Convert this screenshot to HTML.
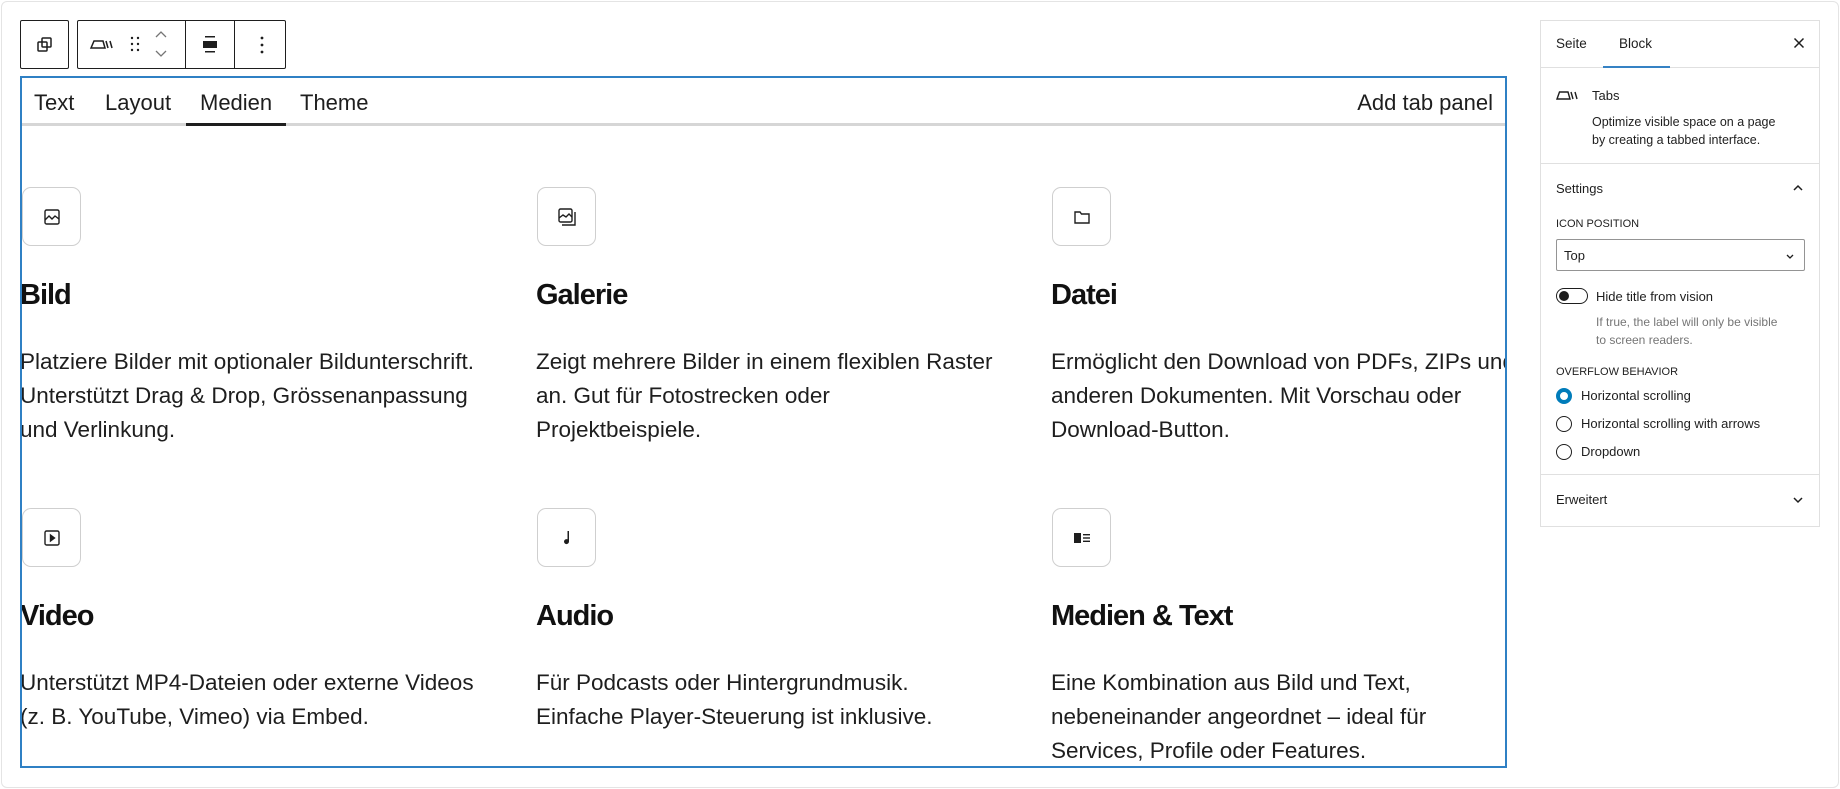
<!DOCTYPE html>
<html><head><meta charset="utf-8"><style>
*{box-sizing:border-box;margin:0;padding:0}
body{width:1840px;height:789px;background:#fff;font-family:"Liberation Sans",sans-serif;color:#1e1e1e;position:relative;overflow:hidden}
.frame{position:absolute;left:1px;top:1px;width:1838px;height:787px;border:1px solid #e4e4e4;border-radius:6px}
.abs{position:absolute}
.tb{position:absolute;top:20px;height:49px;border:1px solid #1e1e1e;border-radius:2px;background:#fff}
.block{position:absolute;left:20px;top:76px;width:1487px;height:692px;border:2px solid #2f80c4;overflow:hidden}
.tab{position:absolute;top:12px;font-size:22px;color:#1e1e1e}
.ib{position:absolute;width:59px;height:59px;border:1.5px solid #cfcfcf;border-radius:9px;display:flex;align-items:center;justify-content:center}
.h{position:absolute;font-size:29px;font-weight:bold;letter-spacing:-1px;color:#111}
.p{position:absolute;font-size:22.5px;line-height:34px;letter-spacing:0;white-space:nowrap;color:#1e1e1e}
.side{position:absolute;left:1540px;top:20px;width:280px;height:507px;border:1px solid #e0e0e0;font-size:13px}
.hr{position:absolute;left:0;width:100%;height:1px;background:#e0e0e0}
.radio{position:absolute;left:15px;width:16px;height:16px;border:1.5px solid #1e1e1e;border-radius:50%}
</style></head><body>
<div class="frame"></div>

<div class="tb" style="left:20px;width:49px">
<svg class="abs" style="left:14px;top:14px" width="20" height="20" viewBox="0 0 20 20" fill="none" stroke="#1e1e1e" stroke-width="1.5"><rect x="3" y="7" width="9" height="9" rx="1"/><rect x="7" y="3" width="9" height="9" rx="1"/></svg>
</div>
<div class="tb" style="left:77px;width:209px">
<svg class="abs" style="left:11px;top:15px" width="28" height="16" viewBox="0 0 28 16" fill="none" stroke="#1e1e1e" stroke-width="1.5"><path d="M2 12 L5 5 H14 L16 12 Z"/><path d="M17 5 L19 12 M21 5 L23 12"/></svg>
<svg class="abs" style="left:52px;top:14px" width="10" height="20" viewBox="0 0 10 20" fill="#1e1e1e"><circle cx="2" cy="3" r="1.2"/><circle cx="8" cy="3" r="1.2"/><circle cx="2" cy="9" r="1.2"/><circle cx="8" cy="9" r="1.2"/><circle cx="2" cy="15" r="1.2"/><circle cx="8" cy="15" r="1.2"/></svg>
<svg class="abs" style="left:76px;top:8px" width="14" height="32" viewBox="0 0 14 32" fill="none" stroke="#757575" stroke-width="1.3"><path d="M2 8 L7 3 L12 8"/><path d="M2 22 L7 27 L12 22"/></svg>
<div class="abs" style="left:107px;top:0;width:1px;height:47px;background:#1e1e1e"></div>
<svg class="abs" style="left:120px;top:12px" width="24" height="24" viewBox="0 0 24 24" fill="#1e1e1e"><rect x="7" y="3" width="10" height="1.5"/><rect x="5" y="8" width="14" height="7"/><rect x="7" y="18" width="10" height="1.5"/></svg>
<div class="abs" style="left:156px;top:0;width:1px;height:47px;background:#1e1e1e"></div>
<svg class="abs" style="left:172px;top:12px" width="24" height="24" viewBox="0 0 24 24" fill="#1e1e1e"><circle cx="12" cy="5" r="1.4"/><circle cx="12" cy="12" r="1.4"/><circle cx="12" cy="19" r="1.4"/></svg>
</div>

<div class="block">
<div class="tab" style="left:12px">Text</div>
<div class="tab" style="left:83px">Layout</div>
<div class="tab" style="left:178px">Medien</div>
<div class="tab" style="left:278px">Theme</div>
<div class="tab" style="right:12px">Add tab panel</div>
<div class="abs" style="left:0;top:45px;width:100%;height:3px;background:#d6d6d6"></div>
<div class="abs" style="left:164px;top:45px;width:100px;height:3px;background:#1e1e1e"></div>

<div class="ib" style="left:0;top:109px"><svg width="20" height="20" viewBox="0 0 20 20" fill="none" stroke="#1e1e1e" stroke-width="1.4"><rect x="3" y="3" width="14" height="14" rx="1.5"/><path d="M3 13 L7 9 L10 12 L13 9 L17 12"/></svg></div>
<div class="ib" style="left:515px;top:109px"><svg width="22" height="22" viewBox="0 0 22 22" fill="none" stroke="#1e1e1e" stroke-width="1.4"><rect x="3" y="3" width="13" height="13" rx="1.5"/><path d="M3 12 L7 9 L10 11 L13 8 L16 11"/><path d="M6 19 H19 V6"/></svg></div>
<div class="ib" style="left:1030px;top:109px"><svg width="20" height="20" viewBox="0 0 20 20" fill="none" stroke="#1e1e1e" stroke-width="1.4"><path d="M3 5 V16 H17 V7 H9.5 L8 5 Z"/></svg></div>

<div class="h" style="left:-2px;top:201px">Bild</div>
<div class="h" style="left:514px;top:201px">Galerie</div>
<div class="h" style="left:1029px;top:201px">Datei</div>

<div class="p" style="left:-2px;top:267px">Platziere Bilder mit optionaler Bildunterschrift.<br>Unterstützt Drag &amp; Drop, Grössenanpassung<br>und Verlinkung.</div>
<div class="p" style="left:514px;top:267px">Zeigt mehrere Bilder in einem flexiblen Raster<br>an. Gut für Fotostrecken oder<br>Projektbeispiele.</div>
<div class="p" style="left:1029px;top:267px">Ermöglicht den Download von PDFs, ZIPs und<br>anderen Dokumenten. Mit Vorschau oder<br>Download-Button.</div>

<div class="ib" style="left:0;top:430px"><svg width="20" height="20" viewBox="0 0 20 20" fill="none" stroke="#1e1e1e" stroke-width="1.4"><rect x="3" y="3" width="14" height="14" rx="1.5"/><path d="M8.5 7 L12.5 10 L8.5 13 Z" fill="#1e1e1e"/></svg></div>
<div class="ib" style="left:515px;top:430px"><svg width="20" height="20" viewBox="0 0 20 20" fill="#1e1e1e"><path d="M10.5 3 H12 V13.5 A2.5 2.5 0 1 1 10.5 11.3 Z"/></svg></div>
<div class="ib" style="left:1030px;top:430px"><svg width="22" height="20" viewBox="0 0 22 20" fill="#1e1e1e"><rect x="3" y="5" width="7" height="10"/><rect x="12" y="6" width="7" height="1.4"/><rect x="12" y="9.3" width="7" height="1.4"/><rect x="12" y="12.6" width="7" height="1.4"/></svg></div>

<div class="h" style="left:-2px;top:522px">Video</div>
<div class="h" style="left:514px;top:522px">Audio</div>
<div class="h" style="left:1029px;top:522px">Medien &amp; Text</div>

<div class="p" style="left:-2px;top:588px">Unterstützt MP4-Dateien oder externe Videos<br>(z. B. YouTube, Vimeo) via Embed.</div>
<div class="p" style="left:514px;top:588px">Für Podcasts oder Hintergrundmusik.<br>Einfache Player-Steuerung ist inklusive.</div>
<div class="p" style="left:1029px;top:588px">Eine Kombination aus Bild und Text,<br>nebeneinander angeordnet – ideal für<br>Services, Profile oder Features.</div>
</div>

<div class="side">
<div class="abs" style="left:15px;top:15px;font-size:13.5px">Seite</div>
<div class="abs" style="left:78px;top:15px;font-size:13.5px;font-weight:500">Block</div>
<svg class="abs" style="left:250px;top:14px" width="16" height="16" viewBox="0 0 16 16" stroke="#1e1e1e" stroke-width="1.5"><path d="M3.5 3.5 L12.5 12.5 M12.5 3.5 L3.5 12.5"/></svg>
<div class="hr" style="top:46px"></div>
<div class="abs" style="left:62px;top:45px;width:67px;height:2px;background:#3582c4"></div>
<svg class="abs" style="left:14px;top:67px" width="26" height="14" viewBox="0 0 26 14" fill="none" stroke="#1e1e1e" stroke-width="1.4"><path d="M2 11 L4.5 4 H13 L15 11 Z"/><path d="M16 4 L18 11 M20 4 L22 11"/></svg>
<div class="abs" style="left:51px;top:67px">Tabs</div>
<div class="abs" style="left:51px;top:92px;line-height:18px;font-size:12.5px">Optimize visible space on a page<br>by creating a tabbed interface.</div>
<div class="hr" style="top:142px"></div>
<div class="abs" style="left:15px;top:160px;font-size:13px">Settings</div>
<svg class="abs" style="left:250px;top:160px" width="14" height="14" viewBox="0 0 14 14" fill="none" stroke="#1e1e1e" stroke-width="1.5"><path d="M3 9 L7 5 L11 9"/></svg>
<div class="abs" style="left:15px;top:197px;font-size:11px">ICON POSITION</div>
<div class="abs" style="left:15px;top:218px;width:249px;height:32px;border:1px solid #949494;border-radius:2px"></div>
<div class="abs" style="left:23px;top:227px;font-size:13px">Top</div>
<svg class="abs" style="left:243px;top:229px" width="12" height="12" viewBox="0 0 12 12" fill="none" stroke="#1e1e1e" stroke-width="1.3"><path d="M3 5 L6 8 L9 5"/></svg>
<div class="abs" style="left:15px;top:267px;width:32px;height:16px;border:1px solid #1e1e1e;border-radius:9px"></div>
<div class="abs" style="left:18px;top:270px;width:10px;height:10px;background:#1e1e1e;border-radius:50%"></div>
<div class="abs" style="left:55px;top:268px;font-size:13px">Hide title from vision</div>
<div class="abs" style="left:55px;top:292px;font-size:12px;line-height:18px;color:#757575">If true, the label will only be visible<br>to screen readers.</div>
<div class="abs" style="left:15px;top:345px;font-size:11px">OVERFLOW BEHAVIOR</div>
<div class="radio" style="top:367px;border:4.5px solid #007cba"></div>
<div class="abs" style="left:40px;top:367px;font-size:13px">Horizontal scrolling</div>
<div class="radio" style="top:395px"></div>
<div class="abs" style="left:40px;top:395px;font-size:13px">Horizontal scrolling with arrows</div>
<div class="radio" style="top:423px"></div>
<div class="abs" style="left:40px;top:423px;font-size:13px">Dropdown</div>
<div class="hr" style="top:453px"></div>
<div class="abs" style="left:15px;top:471px;font-size:13px">Erweitert</div>
<svg class="abs" style="left:250px;top:472px" width="14" height="14" viewBox="0 0 14 14" fill="none" stroke="#1e1e1e" stroke-width="1.5"><path d="M3 5 L7 9 L11 5"/></svg>
</div>
</body></html>
